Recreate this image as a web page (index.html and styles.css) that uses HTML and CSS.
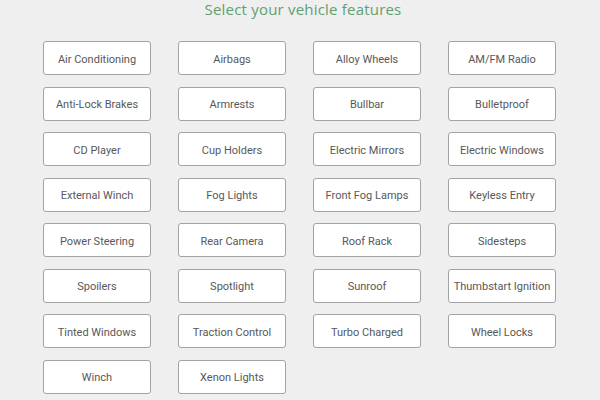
FILE: index.html
```html
<!DOCTYPE html>
<html lang="en">
<head>
<meta charset="UTF-8" />
<title>Vehicle Features</title>
<link rel="stylesheet" href="styles.css">
</head>
<body>

<h2 class="title">Select your vehicle features</h2>

<div class="features">
  <button class="feature">Air Conditioning</button>
  <button class="feature">Airbags</button>
  <button class="feature">Alloy Wheels</button>
  <button class="feature">AM/FM Radio</button>
  <button class="feature">Anti-Lock Brakes</button>
  <button class="feature">Armrests</button>
  <button class="feature">Bullbar</button>
  <button class="feature">Bulletproof</button>
  <button class="feature">CD Player</button>
  <button class="feature">Cup Holders</button>
  <button class="feature">Electric Mirrors</button>
  <button class="feature">Electric Windows</button>
  <button class="feature">External Winch</button>
  <button class="feature">Fog Lights</button>
  <button class="feature">Front Fog Lamps</button>
  <button class="feature">Keyless Entry</button>
  <button class="feature">Power Steering</button>
  <button class="feature">Rear Camera</button>
  <button class="feature">Roof Rack</button>
  <button class="feature">Sidesteps</button>
  <button class="feature">Spoilers</button>
  <button class="feature">Spotlight</button>
  <button class="feature">Sunroof</button>
  <button class="feature">Thumbstart Ignition</button>
  <button class="feature">Tinted Windows</button>
  <button class="feature">Traction Control</button>
  <button class="feature">Turbo Charged</button>
  <button class="feature">Wheel Locks</button>
  <button class="feature">Winch</button>
  <button class="feature">Xenon Lights</button>
</div>

</body>
</html>
```

FILE: styles.css
```css
body {
  margin: 0;
  background: #efefef;
  font-family: "Open Sans", Arial, sans-serif;
  color: #555;
}
.title {
  margin: 0;
  padding: 1px 0 0 6px;
  height: 40px;
  text-align: center;
  font-size: 15px;
  font-weight: normal;
  line-height: 16px;
  letter-spacing: 0.2px;
  color: #62a070;
}
.features {
  display: grid;
  grid-template-columns: repeat(4, 108px);
  column-gap: 27px;
  row-gap: 11.5px;
  margin-left: 43px;
}
.feature {
  height: 34px;
  padding: 2px 0 0;
  background: #fff;
  border: 1px solid #a3a3a3;
  border-radius: 3px;
  font-family: Roboto, Arial, sans-serif;
  font-size: 11px;
  color: #585858;
  cursor: pointer;
}
.feature:hover {
  border-color: #5b9a68;
}
```
